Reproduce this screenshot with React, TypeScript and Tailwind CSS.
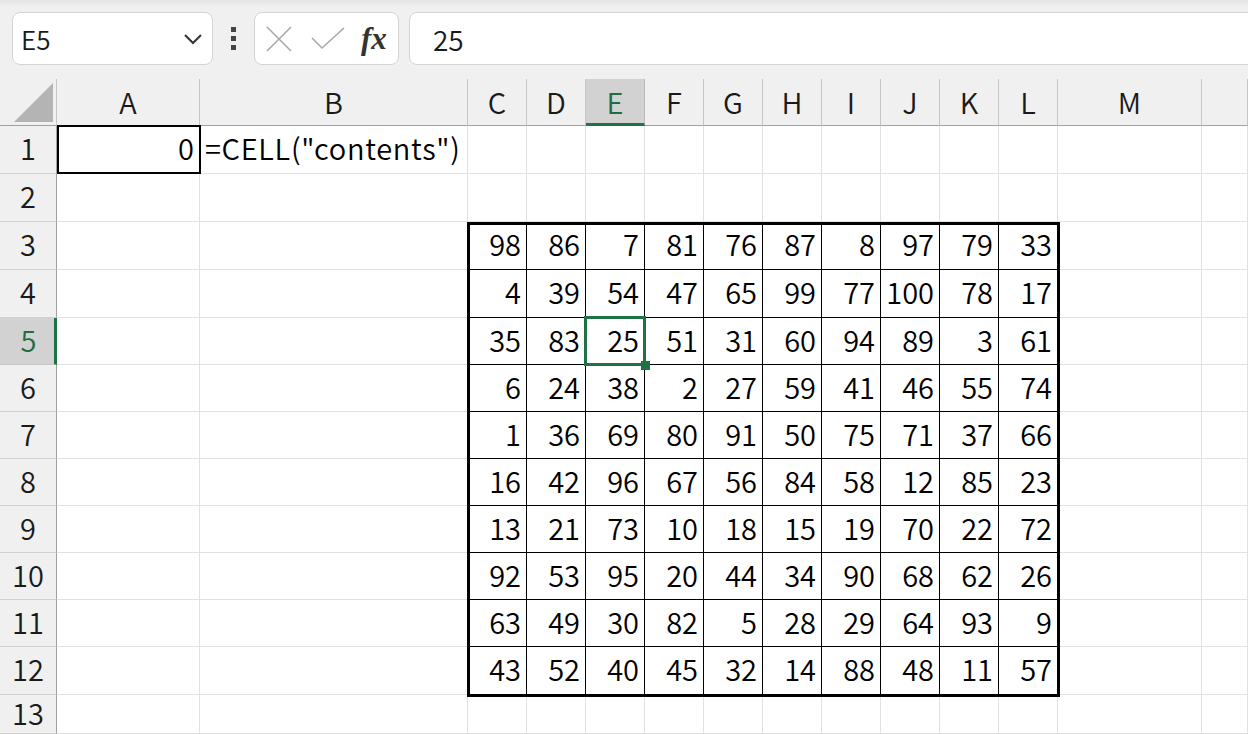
import React from 'react';

const data: number[][] = [
  [98, 86, 7, 81, 76, 87, 8, 97, 79, 33],
  [4, 39, 54, 47, 65, 99, 77, 100, 78, 17],
  [35, 83, 25, 51, 31, 60, 94, 89, 3, 61],
  [6, 24, 38, 2, 27, 59, 41, 46, 55, 74],
  [1, 36, 69, 80, 91, 50, 75, 71, 37, 66],
  [16, 42, 96, 67, 56, 84, 58, 12, 85, 23],
  [13, 21, 73, 10, 18, 15, 19, 70, 22, 72],
  [92, 53, 95, 20, 44, 34, 90, 68, 62, 26],
  [63, 49, 30, 82, 5, 28, 29, 64, 93, 9],
  [43, 52, 40, 45, 32, 14, 88, 48, 11, 57],
];

const columns = ['A', 'B', 'C', 'D', 'E', 'F', 'G', 'H', 'I', 'J', 'K', 'L', 'M', ''];
const inner = ['C', 'D', 'E', 'F', 'G', 'H', 'I', 'J', 'K', 'L'];

function ColHeader({ label }: { label: string }) {
  const active = label === 'E';
  return (
    <div
      className={
        active
          ? 'flex items-center justify-center border-r border-b-[3px] border-r-[#b9b9b9] border-b-[#1f7244] bg-[#d2d2d2] pt-[1px] text-[#1f6e43]'
          : 'flex items-center justify-center border-r border-b border-r-[#c6c6c6] border-b-[#a0a0a0] bg-[#f0f0f0] pb-[2px] text-[#1a1a1a]'
      }
    >
      {label}
    </div>
  );
}

function RowHeader({ n }: { n: number }) {
  const active = n === 5;
  return (
    <div
      className={
        active
          ? 'flex items-center justify-center border-r-[3px] border-b border-r-[#1f7244] border-b-[#c8c8c8] bg-[#d2d2d2] pb-[4px] pl-[3px] text-[#1f6e43]'
          : 'flex items-center justify-center border-r border-b border-r-[#a0a0a0] border-b-[#d0d0d0] bg-[#f0f0f0] pb-[4px] text-[#1a1a1a]'
      }
    >
      {n}
    </div>
  );
}

function Cell({ children, align = 'right' }: { children?: React.ReactNode; align?: 'left' | 'right' }) {
  return (
    <div
      className={
        align === 'right'
          ? 'flex items-center justify-end border-r border-b border-[#e1e1e1] pr-[5px] pb-[4px] whitespace-nowrap'
          : 'flex items-center justify-start border-r border-b border-[#e1e1e1] pl-[5px] pb-[4px] whitespace-nowrap tracking-[0.7px]'
      }
    >
      {children}
    </div>
  );
}

function FormulaBar() {
  return (
    <div className="flex h-[79px] items-start bg-gradient-to-b from-[#e4e4e4] from-0% to-[#f0f0f0] to-[8%] pt-[12px] pl-[12px]">
      <div className="flex h-[53px] w-[201px] items-center justify-between rounded-[8px] border border-[#d4d4d4] bg-white pr-[9px] pl-[8px]">
        <span className="text-[26px] text-[#1a1a1a]">E5</span>
        <svg width="20" height="12" viewBox="0 0 20 12" aria-hidden>
          <polyline points="2,2 10,10 18,2" fill="none" stroke="#333" strokeWidth="2" />
        </svg>
      </div>
      <div className="flex h-[53px] w-[41px] flex-col items-center justify-center gap-[4px]">
        <span className="size-[5px] bg-[#444]" />
        <span className="size-[5px] bg-[#444]" />
        <span className="size-[5px] bg-[#444]" />
      </div>
      <div className="flex h-[53px] w-[145px] items-center rounded-[8px] border border-[#d4d4d4] bg-white pl-[11px]">
        <svg width="26" height="26" viewBox="0 0 26 26" aria-hidden>
          <line x1="1" y1="1" x2="25" y2="25" stroke="#a8a8a8" strokeWidth="1.6" />
          <line x1="25" y1="1" x2="1" y2="25" stroke="#a8a8a8" strokeWidth="1.6" />
        </svg>
        <svg width="34" height="24" viewBox="0 0 34 24" aria-hidden className="ml-[19px]">
          <polyline points="1,11 11,21 33,1" fill="none" stroke="#a8a8a8" strokeWidth="1.6" />
        </svg>
        <span className="ml-[16px] font-['Liberation_Serif',serif] text-[31px] font-bold italic leading-none text-[#333]">
          fx
        </span>
      </div>
      <div className="ml-[10px] -mr-[20px] flex h-[53px] flex-1 items-center rounded-[8px] border border-[#d4d4d4] bg-white pl-[23px]">
        <span className="text-[28px] text-[#1a1a1a]">25</span>
      </div>
    </div>
  );
}

function DataTable() {
  return (
    <div className="relative col-span-10 row-span-10 grid grid-cols-[repeat(10,59px)] grid-rows-[48px_48px_47px_47px_47px_47px_47px_47px_47px_48px]">
      {data.map((row, r) =>
        row.map((v, c) => {
          const selected = r === 2 && c === 2;
          return (
            <div
              key={`${r}-${c}`}
              className="relative flex items-center justify-end border-r border-b border-black pr-[5px] pb-[4px]"
            >
              {v}
              {selected && (
                <>
                  <div className="pointer-events-none absolute -top-[2px] -right-[2px] -bottom-[2px] -left-[2px] z-10 border-[3px] border-[#1f7244]" />
                  <div className="absolute -right-[6px] -bottom-[6px] z-20 size-[9px] bg-[#1f7244]" />
                </>
              )}
            </div>
          );
        }),
      )}
      <div className="pointer-events-none absolute top-0 -right-[2px] -bottom-[2px] -left-[1px] border-[3px] border-black" />
    </div>
  );
}

export default function App() {
  const rows = Array.from({ length: 13 }, (_, i) => i + 1);

  return (
    <div className="h-[734px] w-[1248px] overflow-hidden bg-white font-['Noto_Sans_CJK_JP','Noto_Sans',sans-serif] text-[29px] font-[350] leading-none text-black">
      <FormulaBar />

      <div className="grid h-[655px] grid-cols-[57px_143px_268px_repeat(10,59px)_144px_1fr] grid-rows-[47px_48px_48px_48px_48px_47px_47px_47px_47px_47px_47px_47px_48px_39px]">
        {/* select-all corner */}
        <div className="flex items-end justify-end border-r border-b border-r-[#c6c6c6] border-b-[#a0a0a0] bg-[#f0f0f0] pr-[3px] pb-[3px]">
          <svg width="39" height="39" viewBox="0 0 39 39" aria-hidden>
            <polygon points="39,0 39,39 0,39" fill="#b4b4b4" />
          </svg>
        </div>
        {columns.map((c, i) => (
          <ColHeader key={i} label={c} />
        ))}

        {rows.map((n) => (
          <React.Fragment key={n}>
            <RowHeader n={n} />
            {n === 1 ? (
              <>
                <div className="relative flex items-center justify-end border-r border-b border-[#e1e1e1] pr-[5px] pb-[4px]">
                  0
                  <div className="pointer-events-none absolute -top-[1px] -right-[2px] -bottom-[1px] left-0 border-[2px] border-black" />
                </div>
                <Cell align="left">=CELL("contents")</Cell>
              </>
            ) : (
              <>
                <Cell />
                <Cell />
              </>
            )}
            {n === 3 && <DataTable />}
            {(n < 3 || n > 12) && inner.map((c) => <Cell key={c} />)}
            <Cell />
            <Cell />
          </React.Fragment>
        ))}
      </div>
    </div>
  );
}
